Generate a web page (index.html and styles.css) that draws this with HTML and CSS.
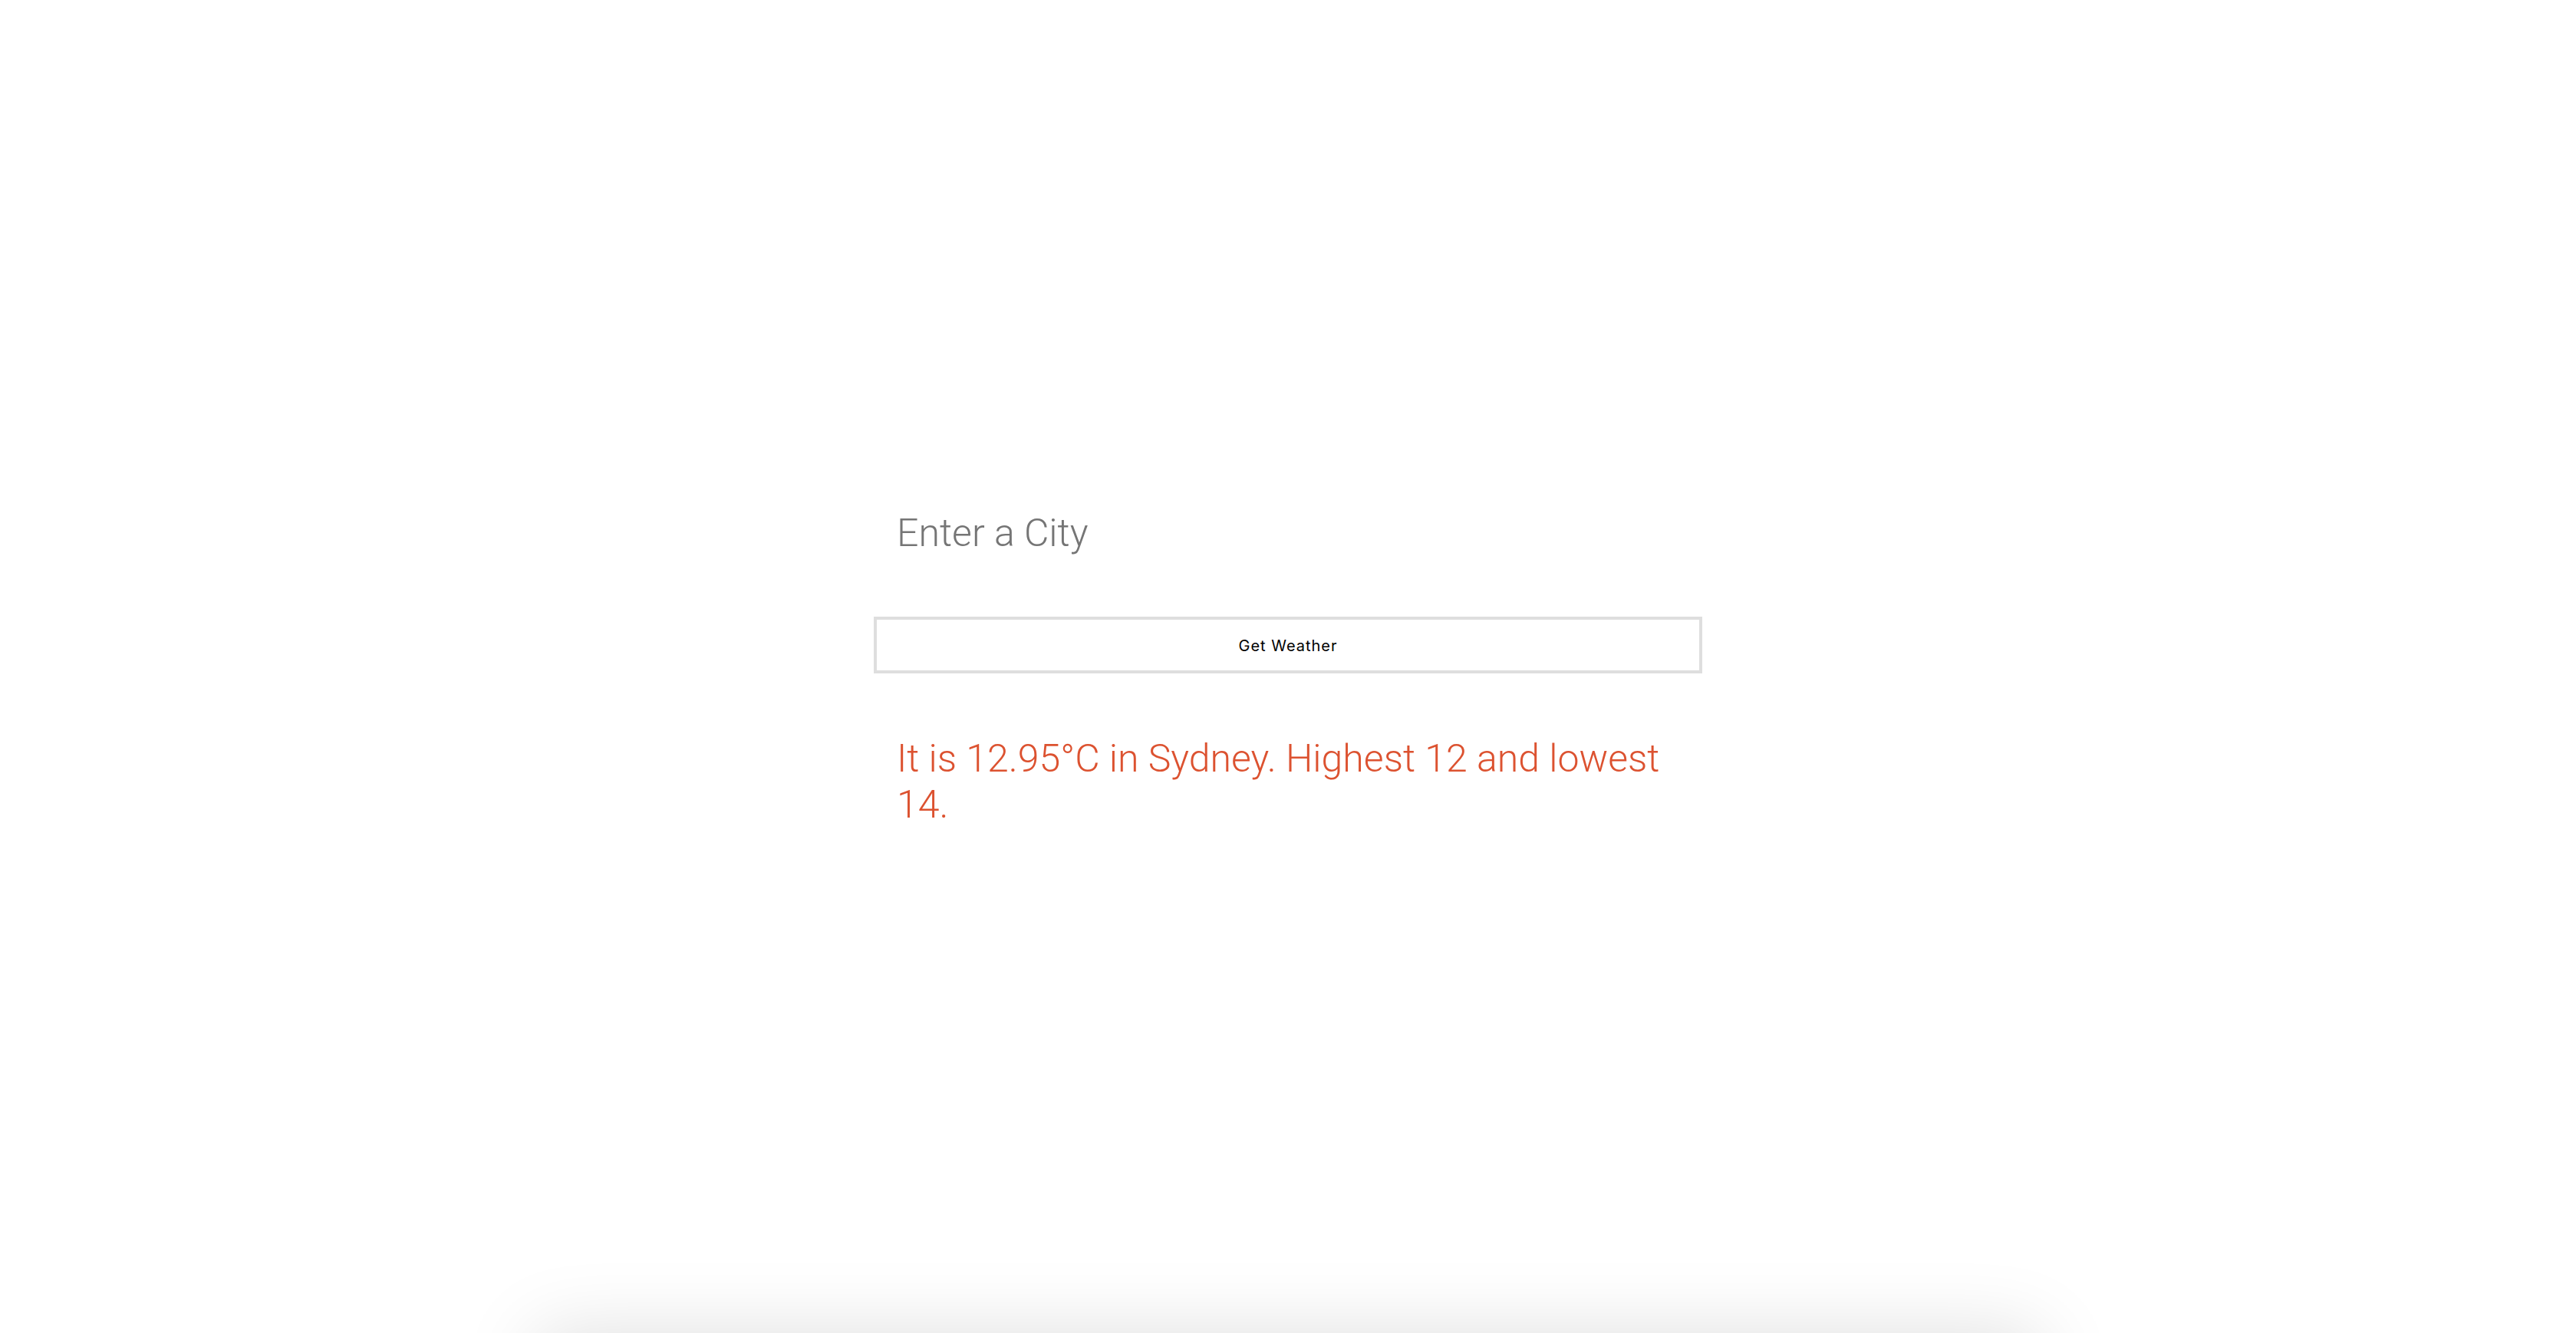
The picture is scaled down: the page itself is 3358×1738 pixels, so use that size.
FILE: index.html
```html
<!DOCTYPE html>
<html lang="en">
<head>
<meta charset="utf-8">
<title>Weather</title>
<link rel="stylesheet" href="styles.css">
</head>
<body>
<div class="viewport">
  <main class="page">
    <form class="weather">
      <input class="city" type="text" placeholder="Enter a City">
      <button class="get" type="button">Get Weather</button>
      <p class="result">It is 12.95°C in Sydney. Highest 12 and lowest 14.</p>
    </form>
  </main>
  <div class="shelf"></div>
</div>
</body>
</html>
```
FILE: styles.css
```css
html, body {
  margin: 0;
  padding: 0;
  background: #ffffff;
}

body {
  font-family: "Liberation Sans", Arial, sans-serif;
  overflow: hidden;
}

.viewport {
  height: 100vh;
  overflow: hidden;
  display: flex;
  flex-direction: column;
}

.page {
  flex: 1 0 auto;
  box-sizing: border-box;
  padding-top: 5px;
  display: flex;
  align-items: center;
  justify-content: center;
}

.weather {
  width: 1080px;
  display: flex;
  flex-direction: column;
  margin: 0;
}

.city {
  display: block;
  box-sizing: border-box;
  width: 100%;
  height: 60px;
  margin: 0 0 79px;
  padding: 0 30px;
  border: none;
  outline: none;
  background: transparent;
  font-family: "Roboto", "Liberation Sans", sans-serif;
  font-weight: 300;
  font-size: 50px;
  line-height: 60px;
  color: #333;
}

.city::placeholder {
  color: #757575;
  opacity: 1;
}

.get {
  display: block;
  box-sizing: border-box;
  width: 100%;
  height: 74px;
  margin: 0;
  padding: 3px 0 0;
  border: 4px solid #dedede;
  background: #ffffff;
  font-family: "Inter", "Liberation Sans", sans-serif;
  font-size: 20px;
  font-weight: 400;
  letter-spacing: 1px;
  color: #000000;
  cursor: pointer;
}

.result {
  margin: 81px 0 0;
  padding: 0 30px;
  font-family: "Roboto", "Liberation Sans", sans-serif;
  font-weight: 300;
  font-size: 50px;
  line-height: 60px;
  color: #dc5230;
}

.shelf {
  flex: none;
  width: 1960px;
  height: 200px;
  margin: 0 auto -200px;
  background: #ffffff;
  box-shadow: 0 0 100px rgba(0, 0, 0, 0.13);
}
```
